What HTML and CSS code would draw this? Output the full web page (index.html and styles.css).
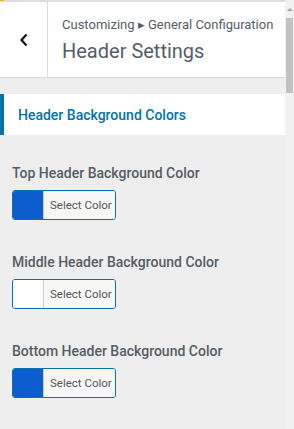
FILE: index.html
```html
<!DOCTYPE html>
<html>
<head>
<meta charset="utf-8">
<link rel="stylesheet" href="styles.css">
</head>
<body>
<div class="frame">
  <div class="main">
    <div class="topline"><span class="topline-mark"></span></div>
    <header class="header">
      <div class="back">
        <svg width="10" height="14" viewBox="0 0 10 14"><polyline points="7.5,1.5 2.5,7 7.5,12.5" fill="none" stroke="#111" stroke-width="2.2" stroke-linejoin="miter"/></svg>
      </div>
      <div class="titles">
        <div class="crumb">Customizing ▸ General Configuration</div>
        <div class="title">Header Settings</div>
      </div>
    </header>
    <div class="section">Header Background Colors</div>
    <div class="controls">
      <div class="control">
        <div class="label">Top Header Background Color</div>
        <div class="picker"><span class="swatch swatch-blue"></span><span class="picker-text">Select Color</span></div>
      </div>
      <div class="control">
        <div class="label">Middle Header Background Color</div>
        <div class="picker"><span class="swatch swatch-white"></span><span class="picker-text">Select Color</span></div>
      </div>
      <div class="control">
        <div class="label">Bottom Header Background Color</div>
        <div class="picker"><span class="swatch swatch-blue"></span><span class="picker-text">Select Color</span></div>
      </div>
    </div>
  </div>
  <div class="scrollbar">
    <div class="scroll-up"></div>
    <div class="scroll-thumb"></div>
  </div>
</div>
</body>
</html>
```

FILE: styles.css
```css
html, body {
  margin: 0;
  padding: 0;
}
body {
  background: #eeeeee;
  font-family: Roboto, "Liberation Sans", sans-serif;
  width: 294px;
  height: 429px;
  overflow: hidden;
}
.frame {
  display: flex;
  height: 429px;
}
.main {
  width: 285px;
  flex: none;
  background: #eeeeee;
}
.topline {
  height: 2px;
  background: #dddddd;
  display: flex;
}
.topline-mark {
  width: 4px;
  height: 1px;
  background: #f0b429;
}
.header {
  display: flex;
  background: #ffffff;
  border-bottom: 1px solid #dddddd;
  height: 75px;
}
.back {
  width: 47px;
  flex: none;
  border-right: 1px solid #dddddd;
  display: flex;
  align-items: center;
  justify-content: center;
  padding-top: 0;
}
.titles {
  padding: 14px 0 0 14px;
  color: #555d66;
  white-space: nowrap;
}
.crumb {
  font-size: 13px;
  line-height: 18px;
}
.title {
  font-size: 20px;
  line-height: 26px;
  margin-top: 4px;
}
.section {
  margin-top: 16px;
  background: #ffffff;
  border-left: 4px solid #0073aa;
  height: 41px;
  display: flex;
  align-items: center;
  padding-left: 14px;
  color: #0073aa;
  font-size: 14px;
  font-weight: 500;
}
.controls {
  padding: 28px 12px 0 12px;
  display: flex;
  flex-direction: column;
  gap: 32px;
}
.label {
  font-size: 14px;
  line-height: 20px;
  font-weight: 500;
  color: #555d66;
  margin-bottom: 7px;
  white-space: nowrap;
}
.picker {
  display: flex;
  width: 104px;
  height: 30px;
  box-sizing: border-box;
  border: 1px solid #0073aa;
  border-radius: 3px;
  overflow: hidden;
}
.swatch {
  width: 30px;
  flex: none;
}
.swatch-blue {
  background: #0c5ecf;
}
.swatch-white {
  background: #ffffff;
}
.picker-text {
  flex: 1;
  border-left: 1px solid #cccccc;
  background: #f7f7f7;
  color: #555555;
  font-size: 11.5px;
  display: flex;
  align-items: center;
  padding-left: 6px;
}
.scrollbar {
  width: 9px;
  flex: none;
  background: #f1f1f1;
  display: flex;
  flex-direction: column;
  align-items: center;
}
.scroll-up {
  margin-top: 8px;
  width: 0;
  height: 0;
  border-left: 3px solid transparent;
  border-right: 3px solid transparent;
  border-bottom: 3px solid #a3a3a3;
}
.scroll-thumb {
  margin-top: 7px;
  width: 7px;
  height: 75px;
  background: #c1c1c1;
}
```
